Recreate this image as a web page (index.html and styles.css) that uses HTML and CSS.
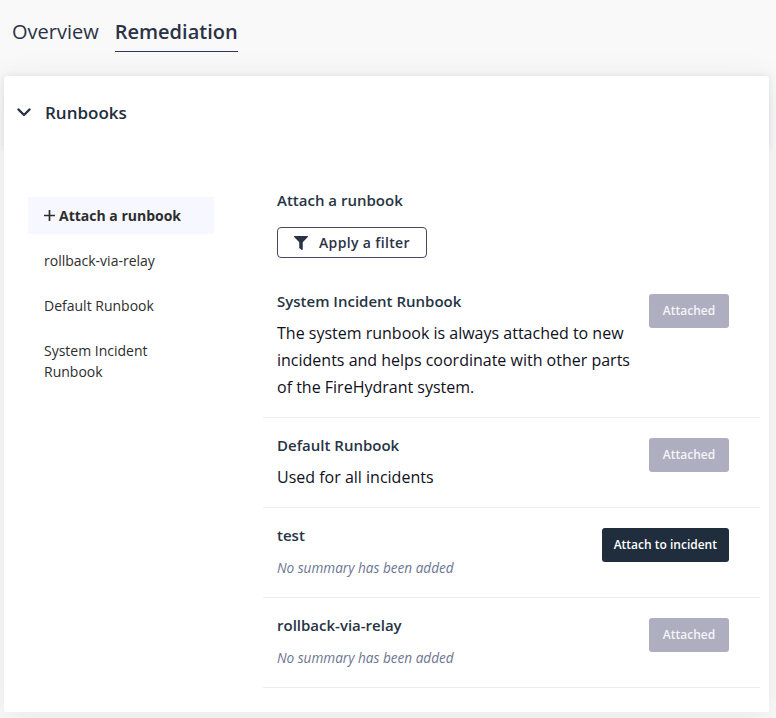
FILE: index.html
```html
<!DOCTYPE html>
<html lang="en">
<head>
<meta charset="utf-8">
<title>Remediation</title>
<link rel="stylesheet" href="styles.css">
</head>
<body>
<nav class="tabs">
  <a class="tab">Overview</a>
  <a class="tab active">Remediation</a>
</nav>
<main class="card">
  <header class="card-head">
    <svg class="chevron" viewBox="0 0 14 9"><path d="M1.500 1.500 7 7l5.500-5.500"/></svg>
    <h2>Runbooks</h2>
  </header>
  <div class="body">
    <aside class="side">
      <a class="item selected"><svg class="plus" viewBox="0 0 11 11"><path d="M5.500 0v11M0 5.500h11"/></svg>Attach a runbook</a>
      <a class="item">rollback-via-relay</a>
      <a class="item">Default Runbook</a>
      <a class="item">System Incident Runbook</a>
    </aside>
    <section class="main">
      <h3 class="title">Attach a runbook</h3>
      <button class="filter"><svg class="funnel" viewBox="0 0 512 512"><path d="M488 0H24C2.700 0-8 25.900 7.100 41L192 225.900V432c0 7.800 3.800 15.200 10.200 19.700l80 56C298 518.700 320 507.500 320 488V225.900L505 41C520 25.900 509.300 0 488 0z"/></svg>Apply a filter</button>
      <div class="row">
        <div class="info"><h3>System Incident Runbook</h3><p>The system runbook is always attached to new incidents and helps coordinate with other parts of the FireHydrant system.</p></div>
        <button class="btn off">Attached</button>
      </div>
      <div class="row">
        <div class="info"><h3>Default Runbook</h3><p>Used for all incidents</p></div>
        <button class="btn off">Attached</button>
      </div>
      <div class="row">
        <div class="info"><h3>test</h3><p class="none">No summary has been added</p></div>
        <button class="btn">Attach to incident</button>
      </div>
      <div class="row">
        <div class="info"><h3>rollback-via-relay</h3><p class="none">No summary has been added</p></div>
        <button class="btn off">Attached</button>
      </div>
    </section>
  </div>
</main>
</body>
</html>
```
FILE: styles.css
```css
* { box-sizing: border-box; }
body { margin: 0; height: 718px; overflow: hidden; background: #f9f9f9; font-family: "Open Sans", sans-serif; color: #2b3245; }
h2, h3, p { margin: 0; }
.tabs { display: flex; gap: 16px; height: 76px; padding: 12px 12px 0; font-size: 20px; line-height: 39px; }
.tab { height: 40px; }
.active { font-weight: 600; border-bottom: 1px solid #34345a; }
.card { width: 765px; height: 636px; margin-left: 4px; background: #fff; border-radius: 3px; box-shadow: 0 4px 32px rgba(30,45,60,.09); }
.card-head { display: flex; align-items: center; gap: 14px; height: 74px; padding: 0 0 2px 13px; border-radius: 3px; box-shadow: 0 0 6px rgba(30,45,60,.09); }
.chevron { width: 14px; height: 9px; fill: none; stroke: #2b3245; stroke-width: 2.400; stroke-linecap: round; stroke-linejoin: round; }
h2 { font-size: 17px; font-weight: 600; color: #1f2d3d; }
.body { position: relative; display: flex; height: 562px; background: #fff; border-radius: 0 0 3px 3px; }
.side { width: 186px; margin: 47px 49px 0 24px; }
.item { display: block; padding: 8px 40px 8px 16px; margin-bottom: 8px; font-size: 14px; line-height: 21px; color: #2d2d2d; }
.selected { display: flex; align-items: center; gap: 4px; padding-right: 0; background: #f7f8ff; font-weight: 700; white-space: nowrap; }
.plus { width: 11px; height: 11px; stroke: #2d2d2d; stroke-width: 1.700; }
.main { width: 497px; padding-top: 39px; }
h3 { font-size: 15px; font-weight: 600; line-height: 22px; color: #263444; }
.title { margin-left: 14px; }
button { font-family: inherit; }
.filter { display: flex; align-items: center; gap: 11px; width: 150px; height: 31px; margin: 16px 0 20px 14px; padding: 0 16px; border: 1px solid #444b60; border-radius: 4px; background: #fff; color: #2b3245; font-size: 14px; font-weight: 600; white-space: nowrap; letter-spacing: .35px; }
.funnel { width: 14px; height: 14px; fill: #2b3245; flex: none; }
.row { display: flex; justify-content: space-between; align-items: flex-start; padding: 12px 31px 16px 14px; border-bottom: 1px solid #eee; }
.row + .row { padding-top: 16px; }
.info { width: 360px; }
.info p { margin-top: 8px; font-size: 16px; line-height: 27px; color: #10101c; }
.info .none { font-size: 13.600px; font-style: italic; color: #6c7690; }
.btn { flex: none; height: 34px; margin-top: 4px; padding: 0 12px 2px; border: 0; border-radius: 3px; background: #1f2d3d; color: #fff; font-size: 12px; font-weight: 600; }
.off { width: 80px; background: #aeaec0; color: #f5f5f8; }
```
